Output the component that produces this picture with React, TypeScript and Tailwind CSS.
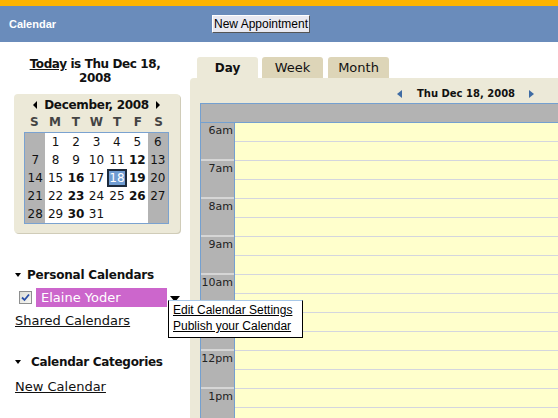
import React from "react";

const weeks: (number | null)[][] = [
  [null, 1, 2, 3, 4, 5, 6],
  [7, 8, 9, 10, 11, 12, 13],
  [14, 15, 16, 17, 18, 19, 20],
  [21, 22, 23, 24, 25, 26, 27],
  [28, 29, 30, 31, null, null, null],
];
const boldDays = [12, 16, 19, 23, 26, 30];
const hours = ["6am", "7am", "8am", "9am", "10am", "11am", "12pm", "1pm"];

const DownArrow = () => (
  <span className="inline-block w-0 h-0 border-l-[3px] border-r-[3px] border-t-[4px] border-l-transparent border-r-transparent border-t-black" />
);

const MiniCalendar = () => (
  <div className="ml-[14px] mt-[9px] w-[166px] rounded-[4px] bg-[#ece9d8] pt-[3px] pl-[10px] pr-[11px] pb-[9px] shadow-[1px_1px_0_#d0ccb8]">
    <div className="h-[16px] flex items-center justify-center gap-[7px] text-[12px] tracking-[-0.3px] font-bold text-[#111] leading-none">
      <span className="inline-block w-0 h-0 border-t-[4px] border-b-[4px] border-r-[4px] border-t-transparent border-b-transparent border-r-black" />
      <span>December, 2008</span>
      <span className="inline-block w-0 h-0 border-t-[4px] border-b-[4px] border-l-[4px] border-t-transparent border-b-transparent border-l-black" />
    </div>
    <div className="mt-[1px] h-[16px] grid grid-cols-7 text-[12px] font-bold text-[#444] leading-[16px] text-center">
      {["S", "M", "T", "W", "T", "F", "S"].map((d, i) => (
        <span key={i}>{d}</span>
      ))}
    </div>
    <div className="mt-[2px] border border-[#7aa2d0] bg-white">
      {weeks.map((w, r) => (
        <div key={r} className="grid grid-cols-7 h-[18px]">
          {w.map((d, c) => {
            const weekend = c === 0 || c === 6;
            const sel = d === 18;
            return (
              <div
                key={c}
                className={`flex items-center justify-center text-[12px] leading-none ${
                  weekend ? "bg-[#b3b3b3]" : ""
                } ${boldDays.includes(d ?? 0) ? "font-bold" : ""} ${
                  sel ? "bg-[#6f9cd2] text-white border-2 border-[#1c2a3c]" : "text-[#111]"
                }`}
              >
                {d ?? ""}
              </div>
            );
          })}
        </div>
      ))}
    </div>
  </div>
);

const Sidebar = () => (
  <div className="w-[190px] shrink-0 pt-[15px]">
    <div className="text-center text-[12px] tracking-[-0.4px] font-bold leading-[14px] text-[#111]">
      <span className="underline">Today</span> is Thu Dec 18,
      <br />
      2008
    </div>
    <MiniCalendar />

    <div className="mt-[34px] h-[16px] pl-[15px] flex items-center gap-[6px] text-[12px] tracking-[-0.2px] font-bold text-[#111]">
      <DownArrow />
      <span>Personal Calendars</span>
    </div>
    <div className="mt-[5px] h-[19px] flex items-center">
      <div className="ml-[19px] w-[13px] h-[13px] border border-[#8e8f8f] bg-gradient-to-br from-[#dcdcd6] to-[#f8f8f4] flex items-center justify-center">
        <svg width="9" height="9" viewBox="0 0 9 9">
          <path d="M1 4.5 L3.5 7 L8 1.5" stroke="#2a4fa8" strokeWidth="1.8" fill="none" />
        </svg>
      </div>
      <div className="ml-[4px] w-[131px] h-[19px] bg-[#cc66cc] text-white text-[13px] leading-[19px] pl-[5px]">
        Elaine Yoder
      </div>
      <span className="ml-[3px] mt-[3px] inline-block w-0 h-0 border-l-[5px] border-r-[5px] border-t-[6px] border-l-transparent border-r-transparent border-t-black" />
    </div>
    <div className="mt-[6px] h-[16px] pl-[15px] text-[13px] leading-[16px] underline text-[#111]">
      Shared Calendars
    </div>
    <div className="mt-[25px] h-[16px] pl-[15px] flex items-center gap-[10px] text-[12px] tracking-[-0.3px] font-bold text-[#111]">
      <DownArrow />
      <span>Calendar Categories</span>
    </div>
    <div className="mt-[9px] h-[16px] pl-[15px] text-[13px] leading-[16px] underline text-[#111]">
      New Calendar
    </div>
  </div>
);

const DayView = () => (
  <div className="flex-1 min-w-0 flex flex-col">
    <div className="mt-[15px] h-[21px] flex pl-[7px]">
      <div className="w-[61px] h-[21px] rounded-t-[3px] bg-[#ece9d8] flex items-center justify-center text-[12px] font-bold text-[#111]">
        Day
      </div>
      <div className="ml-[4px] w-[61px] h-[21px] rounded-t-[3px] bg-[#ddd5b8] flex items-center justify-center text-[13px] text-[#111]">
        Week
      </div>
      <div className="ml-[5px] w-[61px] h-[21px] rounded-t-[3px] bg-[#ddd5b8] flex items-center justify-center text-[13px] text-[#111]">
        Month
      </div>
    </div>
    <div className="flex-1 bg-[#ece9d8] rounded-tl-[4px] pl-[10px] overflow-hidden">
      <div className="mt-[6px] h-[19px] flex items-center pl-[197px]">
        <span className="inline-block w-0 h-0 border-t-[4px] border-b-[4px] border-r-[5px] border-t-transparent border-b-transparent border-r-[#3f6ca4]" />
        <span className="ml-[15px] text-[10px] font-bold text-[#111]">Thu Dec 18, 2008</span>
        <span className="ml-[14px] inline-block w-0 h-0 border-t-[4px] border-b-[4px] border-l-[5px] border-t-transparent border-b-transparent border-l-[#3f6ca4]" />
      </div>
      <div className="border-l border-t border-[#74a0d0]">
        <div className="h-[19px] bg-[#b3b3b3] border-b border-[#74a0d0]" />
        {hours.map((h) => (
          <div key={h} className="flex">
            <div className="w-[33px] h-[38px] bg-[#b3b3b3] border-b-2 border-[#d6d6d6] text-right text-[11px] leading-[13px] pt-[1px] pr-[1px] text-[#222]">
              {h}
            </div>
            <div className="flex-1 border-l border-[#74a0d0] bg-[#ffffcc]">
              <div className="h-[19px] border-b border-[#d4d6de]" />
              <div className="h-[19px] border-b border-[#d4d6de]" />
            </div>
          </div>
        ))}
      </div>
    </div>
  </div>
);

export default function App() {
  return (
    <div
      className="relative w-[558px] h-[418px] overflow-hidden bg-white flex flex-col"
      style={{ fontFamily: '"DejaVu Sans", Verdana, sans-serif' }}
    >
      <div className="h-[6px] bg-[#ffb400]" />
      <div className="h-[36px] bg-[#6a8cbb] flex items-center relative">
        <span className="ml-[9px] text-white text-[11px] font-bold font-['Liberation_Sans',Arial,sans-serif]">
          Calendar
        </span>
        <button className="absolute left-[212px] top-[9px] h-[18px] w-[98px] bg-[#e9e9f1] border border-t-white border-l-white border-b-[#555] border-r-[#555] text-[12px] leading-none text-black font-['Liberation_Sans',Arial,sans-serif]">
          New Appointment
        </button>
      </div>
      <div className="flex flex-1 min-h-0">
        <Sidebar />
        <DayView />
      </div>

      <div className="absolute left-[168px] top-[300px] w-[135px] h-[38px] bg-white border border-black border-t-[#a8c8e8] pl-[4px] pt-[2px] font-['Liberation_Sans',Arial,sans-serif] text-[12px] leading-[16px] text-black">
        <div className="underline leading-[15px]">Edit Calendar Settings</div>
        <div className="underline leading-[15px] mt-[1px]">Publish your Calendar</div>
      </div>
    </div>
  );
}
